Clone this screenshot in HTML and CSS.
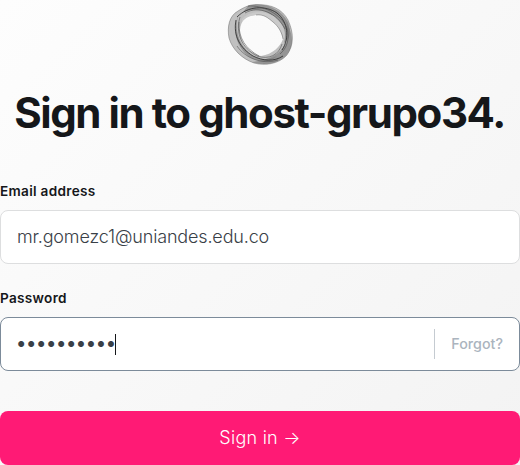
FILE: index.html
```html
<!DOCTYPE html>
<html lang="en">
<head>
<meta charset="utf-8">
<title>Sign in</title>
<link rel="stylesheet" href="styles.css">
</head>
<body>
<main class="signin">
  <header class="header">
    <svg class="logo" viewBox="0 0 90 75" width="90" height="75" aria-hidden="true">
      <path class="wash" fill-rule="evenodd" d="M42 4.500C57 4.500 67 9 73 20C79 33 79 45 72 55C64 64 50 66 39 63C27 59 17 49 14 38C12 27 14 16 23 11C31 6 36 4.500 42 4.500ZM41 15C31 16 26 20 25 30C25 44 34 53 46 56C58 54 65 47 68 39C66 30 62 25 58 22C53 18 49 14 41 15Z"/>
      <path class="shade" d="M69 18C77 30 80 43 73 53C65 64 49 66 37 62C51 60 60 57 66 50C75 41 75 29 69 18Z"/>
      <path class="shade" d="M33 6C50 2 65 8 73 22C77 33 74 40 69 43C72 27 64 19 55 14C47 9 38 9 28 12Z"/>
      <path class="shade" d="M24 14C18 28 24 47 38 56C46 60 55 60 62 56C54 64 41 62 33 56C20 45 17 28 24 14Z"/>
      <path class="veil" d="M27 19C35 10 49 11 59 16C68 23 72 31 69 41C67 31 62 24 57 21C53 18 48 14 41 15C34 16 29 18 27 22Z"/>
      <path class="line dark" d="M22 17C33 6 50 5 62 13C73 22 75 38 67 50M21 20C18 36 25 48 38 56C48 61 59 62 68 56"/>
      <path class="line" d="M25 17C20 33 27 48 42 56C54 60 64 55 67 44M33 6C48 5 66 14 72 28C75 39 72 48 65 54M30 13C44 5 62 13 70 29M24 22C23 38 31 49 44 56M22 46C30 58 47 65 63 60"/>
      <path class="line thin" d="M41 15C49 14 53 18 58 22C63 26 67 32 68 39M42 4.500C57 4.500 67 9 73 20C79 33 79 45 72 55C64 64 50 66 39 63C27 59 17 49 14 38C12 27 14 16 23 11C31 6 36 4.500 42 4.500Z"/>
    </svg>
    <h1 class="title">Sign in to ghost-grupo34.</h1>
  </header>
  <form class="form">
    <div class="group">
      <div class="label">Email address</div>
      <div class="field">mr.gomezc1@uniandes.edu.co</div>
    </div>
    <div class="group">
      <div class="label">Password</div>
      <div class="field focused">
        <span class="dots">••••••••••</span><span class="caret"></span>
        <a class="forgot">Forgot?</a>
      </div>
    </div>
    <button class="submit" type="button">Sign in →</button>
  </form>
</main>
</body>
</html>
```

FILE: styles.css
```css
* { box-sizing: border-box; }

body {
  margin: 0;
  height: 465px;
  overflow: hidden;
  font-family: Inter, sans-serif;
  color: #15171a;
  background: linear-gradient(315deg, #f3f3f3, #fdfdfd);
}

.header {
  display: flex;
  flex-direction: column;
  align-items: center;
  height: 182px;
}

.logo {
  flex: none;
  display: block;
}

.wash { fill: #c0c0c0; }
.shade { fill: #777; opacity: .6; }
.veil { fill: #ccc; opacity: .8; }
.line { fill: none; stroke: #444; stroke-width: .7; opacity: .75; }
.dark { stroke: #222; stroke-width: 1; }
.thin { stroke-width: .5; }

.title {
  margin: 13px 0 0;
  padding-right: 1px;
  font-size: 42px;
  line-height: 50px;
  font-weight: 650;
  letter-spacing: -1.42px;
  white-space: nowrap;
}

.group { height: 107px; }

.label {
  height: 28px;
  font-size: 13.6px;
  line-height: 18px;
  font-weight: 570;
  letter-spacing: .3px;
}

.field {
  display: flex;
  align-items: center;
  height: 54px;
  padding: 0 16px 2px;
  border: 1px solid #dddedf;
  border-radius: 8px;
  background: #fff;
  color: #394047;
  font-size: 18px;
  font-weight: 330;
  letter-spacing: -.16px;
}

.focused {
  padding: 0 16px 0 14px;
  border-color: #7c8b9a;
}

.dots {
  padding-bottom: 4px;
  font-size: 22px;
  line-height: 24px;
  letter-spacing: -2.4px;
}

.caret {
  width: 1px;
  height: 21px;
  background: #15171a;
}

.forgot {
  display: flex;
  align-items: center;
  height: 30px;
  margin-left: auto;
  padding: 0 0 2px 16px;
  border-left: 1px solid #c5cbd1;
  color: #abb4be;
  font-size: 14.3px;
  font-weight: 500;
  letter-spacing: 0;
}

.submit {
  display: block;
  width: 100%;
  height: 54px;
  margin: 15px 0 0;
  padding: 0 0 2px;
  border: 0;
  border-radius: 8px;
  background: #ff1a75;
  color: #fff;
  font: 350 18px Inter, sans-serif;
  letter-spacing: .25px;
}
```
